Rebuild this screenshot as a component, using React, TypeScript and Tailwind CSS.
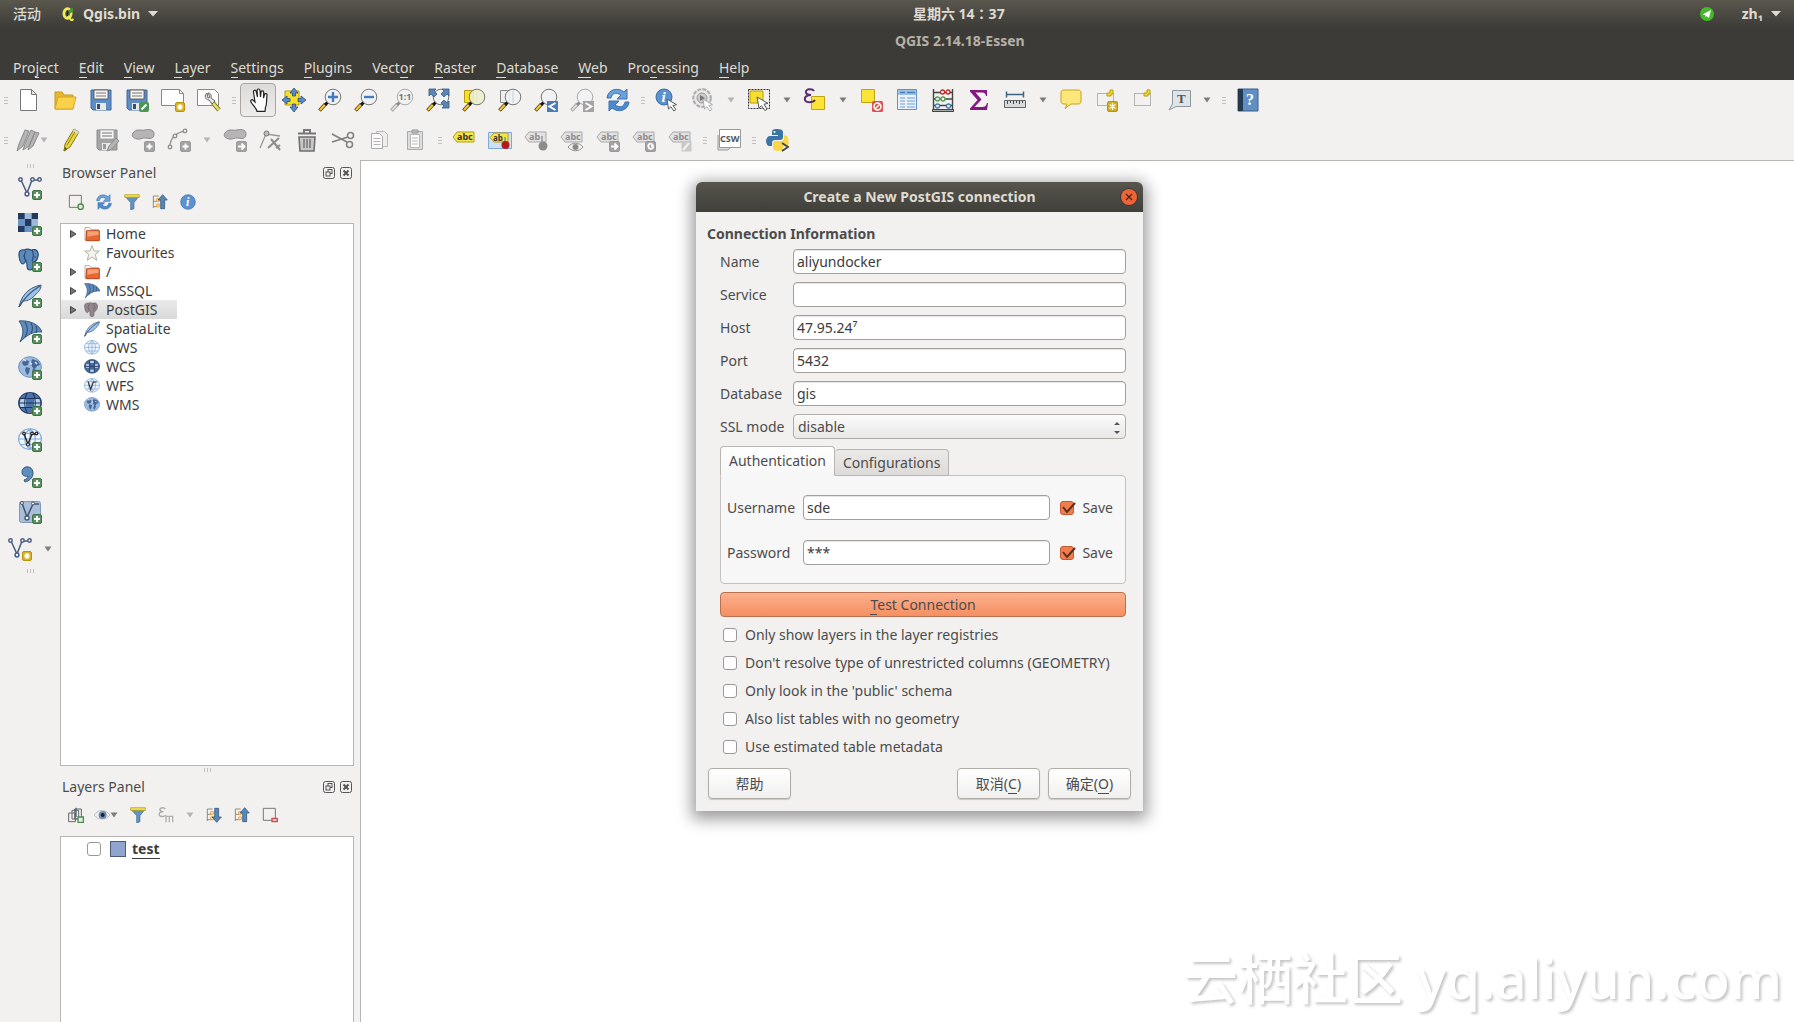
import React, { useState } from 'react';
import clsx from 'clsx';

type IconProps = { children?: React.ReactNode; size?: 'sm' | 'md' };

const Svg: React.FC<IconProps> = ({ children, size = 'md' }) => (
  <svg
    viewBox="0 0 24 24"
    fill="none"
    aria-hidden="true"
    className={clsx('shrink-0', size === 'sm' ? 'size-4' : 'size-6')}
  >
    {children}
  </svg>
);

/* ---------- shared icon parts ---------- */

const PlusBadge = () => (
  <g>
    <rect x="14.5" y="14.5" width="9" height="9" rx="1.5" fill="#5b9160" stroke="#3f7546" />
    <path d="M19 16v6M16 19h6" stroke="#fff" strokeWidth="2" />
  </g>
);

const StarBadge = () => (
  <g>
    <rect x="14.5" y="14.5" width="9" height="9" rx="1.5" fill="#d9b526" stroke="#b8930b" />
    <path d="M19 16v6M16 19h6M17 17l4 4M21 17l-4 4" stroke="#fff" strokeWidth="1.2" />
  </g>
);

const GreyBadge: React.FC<{ d: string }> = ({ d }) => (
  <g>
    <rect x="13.5" y="13.5" width="10" height="10" rx="1.5" fill="#a3a3a3" stroke="#999" />
    <path d={d} stroke="#fff" strokeWidth="1.8" />
  </g>
);

const Cursor: React.FC<{ muted?: boolean }> = ({ muted }) => (
  <path
    d="M12 11l1.5 10 2.4-2.3 3 4.3 2-1.5-3-4 3.6-.8z"
    fill="#fff"
    stroke={muted ? '#aaa' : '#555'}
  />
);

const Lens: React.FC<{ muted?: boolean; fill?: string }> = ({ muted, fill }) => (
  <g>
    <path d="M1.5 22.5l6-6.5" stroke={muted ? '#9a9a9a' : '#5b4a12'} strokeWidth="3.6" />
    <path d="M2 22l5.5-6" stroke={muted ? '#ddd' : '#f5c73c'} strokeWidth="2" />
    <path d="M7 17l3-3" stroke={muted ? '#888' : '#111'} strokeWidth="3" />
    <circle cx="15" cy="9" r="7.8" fill={fill || '#f0f2f4'} fillOpacity=".85" stroke={muted ? '#aaa' : '#777'} />
  </g>
);

const VNodes: React.FC<{ color?: string }> = ({ color = '#4a5d84' }) => (
  <g stroke={color} strokeWidth="1.5" fill="#fff">
    <path d="M3 4l6 13 5-13h7" fill="none" />
    <circle cx="2.5" cy="3.5" r="1.7" />
    <circle cx="14.5" cy="3.5" r="1.7" />
    <circle cx="21.5" cy="3.5" r="1.7" />
    <circle cx="9" cy="18" r="1.9" />
  </g>
);

const GlobeLines: React.FC<{ fill: string; line: string }> = ({ fill, line }) => (
  <g stroke={line} strokeWidth="1.1">
    <ellipse cx="12" cy="11" rx="11.4" ry="10.3" fill={fill} />
    <path d="M12 1v20M1 11h22M3 5.5h18M3 16.5h18M12 1c-7 5-7 15 0 20M12 1c7 5 7 15 0 20" />
  </g>
);

const Continents = () => (
  <g>
    <ellipse cx="12" cy="11" rx="11.4" ry="10.3" fill="#9dbbe0" stroke="#6c8fbd" />
    <path
      d="M4 6l4-2 3 1-1 4-3 1-2-1zM8 11l4 1-1 5-2 2-2-5zM14 3l6 2 2 4-3 1-2 3-3-2-1-4zM15 12l3 2-2 5-2-2z"
      fill="#466793"
    />
    <path d="M5 3l3 2M12 7l2 1M17 6l2 2" stroke="#dce8f5" strokeWidth="1.5" />
  </g>
);

const Elephant: React.FC<{ muted?: boolean }> = ({ muted }) => (
  <g fill={muted ? '#93868d' : '#5b8abb'} stroke={muted ? '#6d6268' : '#27486f'} strokeWidth="1.1">
    <path d="M6 2C2 1 .5 4 1 8c.5 4 2 8 4 8 1 0 2-2 3-3 1 1 1 2 1 5 0 3 1 4 3 4s3-1 3-4v-4c3 1 6-5 5-9-1-4-4-4-7-3-2-1-5-1-7 0z" />
    <path d="M8 3c-2 3-2 7 0 10M14 2c2 3 2 6 0 11M16 9h2M5 8h1" fill="none" />
  </g>
);

const Feather = () => (
  <g>
    <path d="M1 23C3 14 8 4 23 1c0 5-3 7-5 9-4 5-8 7-13 7z" fill="#9dc3e6" stroke="#3b5878" />
    <path d="M1 23C6 14 12 8 22 2" stroke="#3b5878" strokeWidth="1.3" />
  </g>
);

const Sail = () => (
  <g>
    <path d="M1 1c10-1 20 3 23 11-9-1-15 3-22 10 4-8 4-14-1-21z" fill="#5f8cbf" stroke="#35557c" />
    <path d="M7 2c3 5 3 10 0 15M13 3c2 4 2 7 0 10M18 6c1 3 1 5 0 7" stroke="#27466c" />
  </g>
);

const Floppy: React.FC<{ muted?: boolean }> = ({ muted }) => (
  <g>
    <path d="M2 2h20v20H4l-2-2z" fill={muted ? '#a5a5a5' : '#5c8dc4'} stroke={muted ? '#8d8d8d' : '#3f6a9e'} />
    <path d="M5 2h14v9H5z" fill="#f4f4f4" stroke={muted ? '#999' : '#4c4c4c'} strokeWidth=".8" />
    <path d="M7 5h10M7 8h10" stroke="#777" />
    <path d="M7 15h10v7H7z" fill="#e8e8e8" />
    <path d="M8 16h3v5H8z" fill={muted ? '#999' : '#3c4c66'} />
  </g>
);

const Refresh = () => (
  <g>
    <path d="M1 10C2 1 12-1 18 4l3-3v10H11l4-4C10 4 6 5 5 10z" fill="#6aa2dc" stroke="#3e73b0" />
    <path d="M23 14c-1 9-11 11-17 6l-3 3V13h10l-4 4c5 3 9 2 10-3z" fill="#4d8bd0" stroke="#3e73b0" />
  </g>
);

const Funnel = () => (
  <g>
    <path d="M2 4h20l-7 9v9l-5 2V13z" fill="#6393bf" stroke="#456f98" />
    <path d="M1 1h22v4H1z" fill="#f5de4a" stroke="#b29a16" />
  </g>
);

const TreeArrow: React.FC<{ up?: boolean }> = ({ up }) => (
  <g>
    <path d="M2 3v18M2 3h8M2 11h6M2 19h6" stroke="#8a8a8a" strokeWidth="1.5" />
    <path d="M7 7h4v4H7zM7 15h4v4H7z" fill="#fff1d8" stroke="#eaa13a" strokeWidth="1.5" />
    <path
      d={up ? 'M16 1l7 8h-4v13h-6V9H9z' : 'M16 23l7-8h-4V2h-6v13H9z'}
      fill="#5488b5"
      stroke="#27486f"
    />
  </g>
);

const Epsilon: React.FC<{ muted?: boolean }> = ({ muted }) => (
  <path
    d="M11 3C9 0 2 1 3 4.5 3.5 7 6 7 8 7 4 7 1 9 2 12c1 3 8 3 10 0"
    stroke={muted ? '#a8a8a8' : '#5b2d6e'}
    strokeWidth="2"
  />
);

const LabelTag: React.FC<{ muted?: boolean; text?: string }> = ({ muted, text = 'abc' }) => (
  <g>
    <path
      d="M1 9l4-5h17v10H5z"
      fill={muted ? '#e2e2e2' : '#f5e54c'}
      stroke={muted ? '#a9a9a9' : '#b3a012'}
    />
    <text
      x="5"
      y="12"
      fontSize="9"
      fontWeight="700"
      fontFamily="Noto Sans, sans-serif"
      fill={muted ? '#8c8c8c' : '#333'}
    >
      {text}
    </text>
  </g>
);

const Folder = () => (
  <g>
    <path d="M1.5 21V2.500h7l2 3h11V21z" fill="#fff" stroke="#b5aaa5" strokeWidth="1.5" />
    <path d="M4 7h19v15H3z" fill="#e8672f" stroke="#b8461b" strokeWidth="1.5" />
    <path d="M5 8h17v5L5 16z" fill="#f5a077" />
  </g>
);

const Info = () => (
  <g>
    <circle cx="12" cy="12" r="11" fill="#5c92cf" stroke="#3f6ea6" />
    <text x="9" y="18" fontSize="18" fontStyle="italic" fontWeight="700" fontFamily="Liberation Serif, serif" fill="#fff">
      i
    </text>
  </g>
);

/* ---------- controls ---------- */

const Grip: React.FC<{ first?: boolean }> = ({ first }) => (
  <div className={clsx('flex flex-col items-center justify-center gap-[2px]', first ? 'w-[11px]' : 'w-[13px]')}>
    <span className="h-px w-1 bg-[#c4c2bf]" />
    <span className="h-px w-1 bg-[#c4c2bf]" />
    <span className="h-px w-1 bg-[#c4c2bf]" />
  </div>
);

const GripRow = () => (
  <div className="flex h-2 items-center justify-center gap-[2px]">
    <span className="h-1 w-px bg-[#c4c2bf]" />
    <span className="h-1 w-px bg-[#c4c2bf]" />
    <span className="h-1 w-px bg-[#c4c2bf]" />
  </div>
);

const Tool: React.FC<{ label: string; active?: boolean; children: React.ReactNode }> = (props) => (
  <button
    type="button"
    aria-label={props.label}
    className={clsx(
      'flex h-[34px] w-9 shrink-0 items-center justify-center rounded',
      props.active && 'border border-[#a8a5a0] bg-gradient-to-b from-[#dcdbd9] to-[#eeedec]',
    )}
  >
    <Svg>{props.children}</Svg>
  </button>
);

const Drop: React.FC<{ label: string; muted?: boolean; narrow?: boolean }> = ({ label, muted, narrow }) => (
  <button
    type="button"
    aria-label={label}
    className={clsx('flex items-center justify-center', narrow ? 'w-2' : 'h-8 w-5', muted ? 'text-[#b5b5b5]' : 'text-[#7d7d7d]')}
  >
    <svg viewBox="0 0 8 6" className="h-[6px] w-2 shrink-0" aria-hidden="true">
      <path d="M.5.5h7L4 5.5z" fill="currentColor" />
    </svg>
  </button>
);

const SmallTool: React.FC<{ label: string; children: React.ReactNode }> = (props) => (
  <button type="button" aria-label={props.label} className="flex size-7 items-center justify-center">
    <Svg size="sm">{props.children}</Svg>
  </button>
);

/* ---------- top ---------- */

const MENU: [string, number][] = [
  ['Project', 3],
  ['Edit', 0],
  ['View', 0],
  ['Layer', 0],
  ['Settings', 0],
  ['Plugins', 0],
  ['Vector', 4],
  ['Raster', 0],
  ['Database', 0],
  ['Web', 0],
  ['Processing', 3],
  ['Help', 0],
];

const Accel: React.FC<{ text: string; at: number }> = ({ text, at }) => (
  <>
    {text.slice(0, at)}
    <span className="border-b border-current">{text[at]}</span>
    {text.slice(at + 1)}
  </>
);

const Header = () => (
  <header className="h-20 bg-[#3c3b37] bg-gradient-to-b from-[#5a574d] to-[#3c3b37] to-35% text-[#dfdbd2]">
    <div className="flex h-7 items-center text-sm font-bold">
      <div className="flex flex-1 items-center pl-[13px]">
        <button type="button" className="font-medium">
          活动
        </button>
        <button type="button" className="ml-5 flex items-center gap-2">
          <svg viewBox="0 0 14 14" className="size-[14px]" aria-hidden="true">
            <ellipse cx="6.5" cy="6.5" rx="3.6" ry="4.8" fill="none" stroke="#ecec50" strokeWidth="2.8" />
            <path d="M6.5 8.500l4 5 2-1.500" fill="none" stroke="#ecec50" strokeWidth="2" />
            <path d="M7.500 3.500L12 .5v4L8.500 7z" fill="#3f9a28" />
            <path d="M6.5 4v5" stroke="#222" />
          </svg>
          Qgis.bin
          <svg viewBox="0 0 10 6" className="h-[6px] w-[10px]" aria-hidden="true">
            <path d="M0 0h10L5 5.5z" fill="currentColor" />
          </svg>
        </button>
      </div>
      <time className="font-['Noto_Sans','Noto_Sans_CJK_TC',sans-serif]">星期六 14：37</time>
      <div className="flex w-[44%] items-center justify-end gap-7 pr-[13px]">
        <svg viewBox="0 0 14 14" className="size-[14px]" aria-hidden="true">
          <circle cx="7" cy="7" r="7" fill="#45b82c" />
          <path d="M2.5 7.5L11 3 9 11 6.5 9 5.5 10.5V8.3z" fill="#fff" />
        </svg>
        <button type="button" className="flex items-center gap-2">
          zh₁
          <svg viewBox="0 0 10 6" className="h-[6px] w-[10px]" aria-hidden="true">
            <path d="M0 0h10L5 5.5z" fill="currentColor" />
          </svg>
        </button>
      </div>
    </div>
    <h1 className="flex h-[26px] items-center justify-center pl-[7%] text-sm font-bold text-[#b5b1a6]">
      QGIS 2.14.18-Essen
    </h1>
    <nav className="flex h-[26px] items-center gap-5 pt-[2px] pl-[13px] text-sm leading-[18px]">
      {MENU.map(([text, at]) => (
        <button type="button" key={text}>
          <Accel text={text} at={at} />
        </button>
      ))}
    </nav>
  </header>
);

const MainToolbar = () => (
  <div className="flex h-10 items-center">
    <Grip first />
    <Tool label="New project">
      <path d="M3.5 1.5h11l5 5v16h-16z" fill="#fff" stroke="#777" />
      <path d="M14.5 1.5v5h5z" fill="#e8e8e8" stroke="#777" />
    </Tool>
    <Tool label="Open project">
      <path d="M2 21V4h7l2 3h9v14z" fill="#e8b830" stroke="#c79a1c" />
      <path d="M2 21L5 9h18l-3 12z" fill="#fbd14b" stroke="#d6a722" />
    </Tool>
    <Tool label="Save project">
      <Floppy />
    </Tool>
    <Tool label="Save project as">
      <Floppy />
      <rect x="14" y="14" width="10" height="10" rx="2" fill="#4c9358" />
      <path d="M16.5 21.5l5-5" stroke="#fff" strokeWidth="2" />
    </Tool>
    <Tool label="New print composer">
      <path d="M.5 1.5h18l4 4v12H.5z" fill="#fff" stroke="#888" />
      <path d="M18.5 1.5v4h4" stroke="#888" />
      <StarBadge />
    </Tool>
    <Tool label="Composer manager">
      <path d="M.5 1.5h17l4 4v12H.5z" fill="#fff" stroke="#888" />
      <path d="M16 15l6 7" stroke="#8b8025" strokeWidth="4.5" />
      <path d="M16 15l6 7" stroke="#e4e07a" strokeWidth="2.5" />
      <path d="M10 5c-3 2-2 7 2 7l3 4 3-3-4-3c1-4-1-5-3-5l2 4-2 1z" fill="#e8e8e8" stroke="#666" />
    </Tool>
    <Grip />
    <Tool label="Pan map" active>
      <path
        d="M9 14L7.500 4c-.3-2 2.200-2.500 2.700-.5L11.500 9l-.4-6.500c0-2 2.700-2 2.900 0L14.500 9l.6-5c.2-1.800 2.700-1.500 2.600.3L17.500 10l1-3.500c.6-1.600 2.800-1 2.500.8-.8 5 .2 9-1.500 12l-.5 4h-8C10.500 20 6.500 17 5 14c-1-2 1-3 2.300-1.700z"
        fill="#fff"
        stroke="#222"
        strokeWidth="1.2"
      />
    </Tool>
    <Tool label="Pan map to selection">
      <path d="M3 3h14v14H3z" fill="#f7df2c" stroke="#b59d10" />
      <path
        d="M12 0l4 5h-2.5v3h-3V5H8zM12 24l4-5h-2.5v-3h-3v3H8zM0 12l5-4v2.5h3v3H5V16zM24 12l-5-4v2.5h-3v3h3V16z"
        fill="#5a8cc6"
        stroke="#274b78"
        strokeWidth=".8"
      />
    </Tool>
    <Tool label="Zoom in">
      <Lens />
      <path d="M15 4v10M10 9h10" stroke="#447cc0" strokeWidth="2.4" />
    </Tool>
    <Tool label="Zoom out">
      <Lens />
      <path d="M10 9h10" stroke="#447cc0" strokeWidth="2.4" />
    </Tool>
    <Tool label="Zoom to native resolution">
      <Lens muted />
      <text x="8.5" y="12" fontSize="9" fontWeight="700" fontFamily="Noto Sans, sans-serif" fill="#777">
        1:1
      </text>
    </Tool>
    <Tool label="Zoom full">
      <Lens />
      <path
        d="M3 1h7L8 3l3 3-3 3-3-3-2 2zM23 1v7l-2-2-3 3-3-3 3-3-2-2zM23 20h-7l2-2-3-3 3-3 3 3 2-2z"
        fill="#5a86b8"
        stroke="#34597f"
        strokeWidth=".8"
      />
    </Tool>
    <Tool label="Zoom to selection">
      <path d="M2.5 2.5h9v12h-9z" fill="#f7df2c" stroke="#b59d10" />
      <Lens fill="#eef0c8" />
      <path d="M15 3v12" stroke="#ddd" />
    </Tool>
    <Tool label="Zoom to layer">
      <path d="M2.5 2.5h9v12h-9z" fill="#eee" stroke="#888" />
      <Lens />
      <path d="M15 3v12" stroke="#ccc" />
    </Tool>
    <Tool label="Zoom last">
      <Lens />
      <path d="M13 13h11v11H13z" fill="#4a7db5" />
      <path d="M21.5 15l-6 3.5 6 3.5" stroke="#fff" strokeWidth="2" />
    </Tool>
    <Tool label="Zoom next">
      <Lens muted />
      <path d="M13 13h11v11H13z" fill="#a3a3a3" />
      <path d="M15.5 15l6 3.5-6 3.5" stroke="#fff" strokeWidth="2" />
    </Tool>
    <Tool label="Refresh">
      <Refresh />
    </Tool>
    <Grip />
    <Tool label="Identify features">
      <circle cx="9" cy="9" r="8" fill="#5c92cf" stroke="#3f6ea6" />
      <text x="6.5" y="14" fontSize="15" fontStyle="italic" fontWeight="700" fontFamily="Liberation Serif, serif" fill="#fff">
        i
      </text>
      <Cursor />
    </Tool>
    <Tool label="Run feature action">
      <circle cx="11" cy="10" r="8.8" fill="#e9e9e9" stroke="#b0b0b0" strokeWidth="2.2" strokeDasharray="4 1.2" />
      <circle cx="11" cy="10" r="5" fill="#ccc" stroke="#999" />
      <path d="M9 7l5 3-5 3z" fill="#777" />
      <Cursor muted />
    </Tool>
    <Drop label="Feature actions" muted />
    <Tool label="Select features">
      <path d="M1.5 1.5h21v19h-21z" stroke="#333" strokeDasharray="2 1" />
      <path d="M3 3h13v12H3z" fill="#f7df2c" stroke="#b59d10" />
      <path d="M10 9l2 11 2.4-2.3 3.6 5 2-1.5-3-5 4-.8z" fill="#fff" stroke="#555" />
    </Tool>
    <Drop label="Selection tools" />
    <Tool label="Select by expression">
      <path d="M8.5 8.5h13v13h-13z" fill="#fbe338" stroke="#c2a512" />
      <Epsilon />
    </Tool>
    <Drop label="Expression tools" />
    <Tool label="Deselect features">
      <path d="M2.5 1.5h13v13h-13z" fill="#fbe338" stroke="#c2a512" />
      <rect x="13" y="13" width="11" height="11" rx="1.5" fill="#d9534f" />
      <circle cx="18.5" cy="18.5" r="3.5" stroke="#fff" strokeWidth="1.5" />
      <path d="M16 21l5-5" stroke="#fff" strokeWidth="1.5" />
    </Tool>
    <Tool label="Attribute table">
      <path d="M2.5 1.5h19v20h-19z" fill="#eaf2fb" stroke="#5f92c9" />
      <path d="M3 2h18v5H3z" fill="#9cc2ea" />
      <path d="M5 4.5h5M12 4.5h8" stroke="#4c7fb8" strokeWidth="1.5" />
      <path d="M5 10h5M12 10h8M5 13h5M12 13h8M5 16h5M12 16h8M5 19h5M12 19h8" stroke="#6d9dcf" />
    </Tool>
    <Tool label="Field calculator">
      <path d="M2.5 1v21M21.5 1v21M1 22.5h22M2 4.5h20M2 11h20M2 17.5h20" stroke="#444" strokeWidth="1.4" />
      <path d="M1.5 21.5h21v2h-21z" fill="#aaa" stroke="#444" />
      <g fill="#fff" strokeWidth="1.3">
        <circle cx="11.5" cy="4" r="2" stroke="#c12a2a" />
        <circle cx="17" cy="4" r="2" stroke="#c12a2a" />
        <circle cx="6.5" cy="11" r="2" stroke="#4ea04e" />
        <circle cx="12" cy="11" r="2" stroke="#4ea04e" />
        <circle cx="6.5" cy="18" r="2" stroke="#3f7ab0" />
        <circle cx="17.5" cy="18" r="2" stroke="#3f7ab0" />
      </g>
    </Tool>
    <Tool label="Statistical summary">
      <path
        d="M3 2h17v6h-1c-.5-3-2-3.5-5-3.5H8.5l6 7-7 7.5H15c3 0 4-1 5-4h1l-1 7H3v-1.5L10.5 12 3 3.5z"
        fill="#811a80"
      />
    </Tool>
    <Tool label="Measure line">
      <path d="M3.5 6.5h17M3.5 3.5v6M20.5 3.5v6" stroke="#3d6480" strokeWidth="1.5" />
      <path d="M1.5 12.5h21v7h-21z" fill="#d8dcdf" stroke="#666" />
      <path d="M4.5 13v3M7.5 13v2M10.5 13v3M13.5 13v2M16.5 13v3M19.5 13v2" stroke="#444" />
    </Tool>
    <Drop label="Measure tools" />
    <Tool label="Map tips">
      <path
        d="M5 2h14c2 0 3 1 3 3v8c0 2-1 3-3 3h-7l-6 4.5L8 16H5c-2 0-3-1-3-3V5c0-2 1-3 3-3z"
        fill="#fbe77c"
        stroke="#c9a41a"
      />
    </Tool>
    <Tool label="New bookmark">
      <path d="M2.5 5.5h16v12h-16z" stroke="#777" strokeDasharray="1 1" />
      <path d="M15 2h3v4h-2v2h-4V5h3z" fill="#fbdd2c" stroke="#bb9a0c" />
      <rect x="12.5" y="13.5" width="10" height="10" rx="1.5" fill="#cfae22" stroke="#b8930b" />
      <path d="M17.5 15v7M14.5 16.500l6 4M20.5 16.500l-6 4" stroke="#fff" strokeWidth="1.2" />
    </Tool>
    <Tool label="Show bookmarks">
      <path d="M3.5 5.5h16v12h-16z" stroke="#777" strokeDasharray="1 1" />
      <path d="M16 2h3v4h-2v2h-4V5h3z" fill="#fbdd2c" stroke="#bb9a0c" />
    </Tool>
    <Tool label="Text annotation">
      <path d="M5.5 2.5h18v16H9L2 22l3.500-6z" fill="#dfe4e8" stroke="#8d979f" />
      <text x="10" y="15" fontSize="13" fontWeight="700" fontFamily="Liberation Serif, serif" fill="#555">
        T
      </text>
    </Tool>
    <Drop label="Annotation tools" />
    <Grip />
    <Tool label="Help contents">
      <path d="M2 1h20v22H2z" fill="#5f8fc4" stroke="#3b5f8a" />
      <path d="M2 1h5v22H2z" fill="#243950" />
      <text x="10" y="17" fontSize="16" fontFamily="Liberation Serif, serif" fontWeight="700" fill="#fff">
        ?
      </text>
    </Tool>
  </div>
);

const Blob = () => (
  <path d="M2 5c3-5 9-2 12-3s9-1 9 4-4 5-8 4c-3-1-5 2-9 1S0 8 2 5z" fill="#b5b5b5" stroke="#8c8c8c" />
);

const EditToolbar = () => (
  <div className="flex h-10 items-center">
    <Grip first />
    <div className="flex w-[42px] items-center pl-[5px]">
      <button type="button" aria-label="Current edits">
        <Svg>
          <path d="M1 23l2-7L9 2l4 1-6 15zM7 22l2-6 6-14 4 2-6 14zM12 22l2-6 5-12 4 1-6 13z" fill="#b5b5b5" stroke="#8c8c8c" />
        </Svg>
      </button>
      <Drop label="Edit options" muted narrow />
    </div>
    <Tool label="Toggle editing">
      <path d="M5 23l1-7L15 1l5 3-9 15z" fill="#e8d438" stroke="#857819" />
      <path d="M8 17l9-15M5 23l1-4 2 2z" stroke="#8f8221" fill="#333" />
      <path d="M15 1l5 3-1 2-5-3z" fill="#ddd" />
    </Tool>
    <Tool label="Save layer edits">
      <Floppy muted />
      <path d="M12 23l2-5 7-8 3 3-7 8z" fill="#b5b5b5" stroke="#8c8c8c" />
    </Tool>
    <Tool label="Add feature">
      <Blob />
      <GreyBadge d="M18.5 15.5v6M15.5 18.5h6" />
    </Tool>
    <Tool label="Add circular string">
      <path d="M3 19C3 10 8 5 18 3" stroke="#9a9a9a" strokeWidth="1.3" />
      <g fill="#eee" stroke="#8c8c8c" strokeWidth="1.3">
        <circle cx="3" cy="19" r="1.8" />
        <circle cx="8" cy="8" r="1.8" />
        <circle cx="18" cy="3" r="1.8" />
      </g>
      <GreyBadge d="M18.5 15.5v6M15.5 18.5h6" />
    </Tool>
    <Drop label="Curve tools" muted />
    <Tool label="Move feature">
      <Blob />
      <GreyBadge d="M15 18.5h6M18.5 15.5l3 3-3 3" />
    </Tool>
    <Tool label="Node tool">
      <path d="M1 20L7 6l14 2" stroke="#999" strokeWidth="1.3" />
      <circle cx="7.5" cy="5.5" r="2.5" fill="#bbb" stroke="#777" />
      <path d="M20 10L9 20M12 11l9 11M17 20l4-3" stroke="#8c8c8c" strokeWidth="2" />
    </Tool>
    <Tool label="Delete selected">
      <path d="M4 9h16l-1 14H5z" fill="#c8c8c8" stroke="#6f6f6f" strokeWidth="1.6" />
      <path d="M3 5.5h18M9 5V2h6v3" stroke="#777" strokeWidth="2" />
      <path d="M9 11v9M12 11v9M15 11v9" stroke="#777" strokeWidth="1.5" />
    </Tool>
    <Tool label="Cut features">
      <path d="M1 6l15 8M1 14l16-5" stroke="#808080" strokeWidth="1.6" />
      <circle cx="19.5" cy="7.5" r="3" stroke="#808080" strokeWidth="1.5" />
      <circle cx="18.5" cy="16.5" r="3" stroke="#808080" strokeWidth="1.5" />
    </Tool>
    <Tool label="Copy features">
      <path d="M9.5 3.5h8l3 3v12h-11z" fill="#eee" stroke="#bbb" />
      <path d="M4.5 5.5h8l3 3v12h-11z" fill="#fafafa" stroke="#aaa" />
      <path d="M6.5 10.5h7M6.5 13.5h7M6.5 16.5h7" stroke="#b5b5b5" />
    </Tool>
    <Tool label="Paste features">
      <path d="M4.5 3.5h15v18h-15z" fill="#ddd" stroke="#aaa" />
      <path d="M7.5 6.5h9v13h-9z" fill="#fff" stroke="#b5b5b5" />
      <path d="M9 2h6v3H9z" fill="#bbb" stroke="#999" />
      <path d="M9 10h6M9 13h6M9 16h6" stroke="#b5b5b5" />
    </Tool>
    <Grip />
    <Tool label="Layer labeling options">
      <LabelTag />
    </Tool>
    <Tool label="Highlight pinned labels">
      <path d="M.5 4.5h23v16H.5z" fill="#cfe0f5" stroke="#7fa8db" />
      <path d="M2 9.5L6 5h14v9H6z" fill="#f5e54c" stroke="#b3a012" />
      <text x="5" y="12.5" fontSize="8" fontWeight="700" fontFamily="Noto Sans, sans-serif" fill="#333">
        ab
      </text>
      <path d="M17 9v7" stroke="#888" strokeWidth="1.5" />
      <circle cx="17.5" cy="17" r="4" fill="#b01c1c" />
    </Tool>
    <Tool label="Pin labels">
      <LabelTag muted text="ab" />
      <path d="M18 8v8" stroke="#aaa" strokeWidth="2" />
      <circle cx="19" cy="18" r="4.5" fill="#8c8c8c" />
    </Tool>
    <Tool label="Show or hide labels">
      <LabelTag muted />
      <path d="M8 19c4-5 11-5 15 0-4 5-11 5-15 0z" fill="#f5f5f5" stroke="#8c8c8c" />
      <circle cx="15.5" cy="19" r="3" fill="#888" />
    </Tool>
    <Tool label="Move label">
      <LabelTag muted />
      <GreyBadge d="M15 18.5h6M18.5 15.5l3 3-3 3" />
    </Tool>
    <Tool label="Rotate label">
      <LabelTag muted />
      <GreyBadge d="M21 17c-3-3-6 0-4 3 2 2 5 0 4-2h-2" />
    </Tool>
    <Tool label="Change label">
      <LabelTag muted />
      <path d="M13.5 13.5h10v10h-10z" fill="#c9c9c9" />
      <path d="M15 22l6-7" stroke="#f2f2f2" strokeWidth="2" />
    </Tool>
    <Grip />
    <Tool label="MetaSearch">
      <path d="M1 7v15h10l2-2" stroke="#999" fill="#ddd" />
      <path d="M2.5 1.5h21v18h-21z" fill="#fff" stroke="#999" />
      <text x="3" y="14" fontSize="9" fontWeight="700" fontFamily="Noto Sans, sans-serif" fill="#555">
        CSW
      </text>
    </Tool>
    <Grip />
    <Tool label="Python console">
      <path d="M11 1c-4 0-5 1-5 3v3h6v1H4c-2 0-4 2-4 5s2 5 3 5h3v-3c0-2 1-3 3-3h5c2 0 3-1 3-3V4c0-2-2-3-6-3z" fill="#3b75a5" />
      <circle cx="8.5" cy="4" r="1" fill="#fff" />
      <path d="M18 7v3c0 2-1 3-3 3h-5c-2 0-3 1-3 3v4c0 2 2 3 5 3s5-1 5-3v-2h5c1-1 1-8-1-10z" fill="#fbd648" />
      <path d="M16 15l6 4-6 4" stroke="#444" strokeWidth="1.8" />
    </Tool>
  </div>
);

/* ---------- docks ---------- */

const LayerToolbar = () => (
  <aside className="flex w-[60px] shrink-0 flex-col items-center pt-[2px] [&>button]:my-px">
    <GripRow />
    <Tool label="Add vector layer">
      <VNodes />
      <PlusBadge />
    </Tool>
    <Tool label="Add raster layer">
      <path d="M0 1h20v19H0z" fill="#6a93c4" />
      <path d="M0 1h6.5v6H0zM13.5 1H20v6h-6.5zM7 7h6.5v7H7zM0 14h6.5v6H0z" fill="#233a5e" />
      <path d="M7 1h6.5v6H7zM13.5 7H20v7h-6.5z" fill="#9db8d9" />
      <PlusBadge />
    </Tool>
    <Tool label="Add PostGIS layer">
      <Elephant />
      <PlusBadge />
    </Tool>
    <Tool label="Add SpatiaLite layer">
      <Feather />
      <PlusBadge />
    </Tool>
    <Tool label="Add MSSQL layer">
      <Sail />
      <PlusBadge />
    </Tool>
    <Tool label="Add WMS layer">
      <Continents />
      <PlusBadge />
    </Tool>
    <Tool label="Add WCS layer">
      <ellipse cx="12" cy="11" rx="11.2" ry="10.2" fill="#b8d0ec" stroke="#27406b" strokeWidth="1.5" />
      <path d="M4 4c5-4 11-4 16 0l1 2H3zM3 16h18c-4 6-14 6-18 0zM8 7h8v8H8z" fill="#4a73a8" />
      <path d="M1 11h22M2 6.5h20M2 15.5h20M9 1c-3 6-3 14 0 20M15 1c3 6 3 14 0 20" stroke="#1f355c" strokeWidth="1.2" />
      <PlusBadge />
    </Tool>
    <Tool label="Add WFS layer">
      <GlobeLines fill="#f3f8fe" line="#7fa9dc" />
      <path d="M6 6l4 10 4-10h5" stroke="#222" strokeWidth="1.4" />
      <g fill="#fff" stroke="#222" strokeWidth="1.2">
        <circle cx="6" cy="5.5" r="1.3" />
        <circle cx="14" cy="5.5" r="1.3" />
        <circle cx="18.5" cy="5.5" r="1.3" />
        <circle cx="10" cy="16.5" r="1.5" />
      </g>
      <PlusBadge />
    </Tool>
    <Tool label="Add delimited text layer">
      <path d="M4 8c0-7 11-7 11 1 0 5-4 8-8 9l-1-2c3-1 4-2 4-4-4 1-6-1-6-4z" fill="#5c8fc0" stroke="#35557c" />
      <PlusBadge />
    </Tool>
    <Tool label="Add virtual layer">
      <rect x="1.5" y="1.5" width="21" height="21" rx="2" fill="#a9bfd9" stroke="#7f98b8" />
      <path d="M4 3l5 14 6-13h6" stroke="#44546f" strokeWidth="1.5" />
      <circle cx="9" cy="18" r="2" fill="#fff" stroke="#44546f" strokeWidth="1.3" />
      <circle cx="4" cy="3" r="1.5" fill="#fff" stroke="#44546f" />
      <circle cx="15" cy="3.5" r="1.5" fill="#fff" stroke="#44546f" />
      <PlusBadge />
    </Tool>
    <div className="mt-px flex h-9 w-full items-center pl-[2px]">
      <Tool label="New shapefile layer">
        <VNodes />
        <StarBadge />
      </Tool>
      <Drop label="New layer types" />
    </div>
    <GripRow />
  </aside>
);

const PanelTitle: React.FC<{ title: string }> = ({ title }) => (
  <div className="flex h-[25px] items-center gap-[5px] pr-[2px] pl-[2px] text-sm text-[#4c4c4c]">
    <h2 className="flex-1">{title}</h2>
    <button type="button" aria-label={`Float ${title}`}>
      <svg viewBox="0 0 12 12" className="size-3" fill="none" stroke="#555" aria-hidden="true">
        <rect x=".5" y=".5" width="11" height="11" rx="2" />
        <rect x="5" y="2.5" width="4" height="4" />
        <rect x="3" y="5" width="4" height="4" fill="#f2f1f0" />
      </svg>
    </button>
    <button type="button" aria-label={`Close ${title}`}>
      <svg viewBox="0 0 12 12" className="size-3" fill="none" stroke="#555" aria-hidden="true">
        <rect x=".5" y=".5" width="11" height="11" rx="2" />
        <path d="M3.5 3.5l5 5M8.5 3.5l-5 5" strokeWidth="2" />
      </svg>
    </button>
  </div>
);

const TREE: { name: string; icon: React.ReactNode; open?: boolean; selected?: boolean }[] = [
  { name: 'Home', icon: <Folder />, open: true },
  {
    name: 'Favourites',
    icon: <path d="M12 1l3 8h8l-6 5 2 9-7-5-7 5 2-9-6-5h8z" fill="#f4f4ee" stroke="#b3b3a8" strokeWidth="1.5" />,
  },
  { name: '/', icon: <Folder />, open: true },
  { name: 'MSSQL', icon: <Sail />, open: true },
  { name: 'PostGIS', icon: <Elephant muted />, open: true, selected: true },
  { name: 'SpatiaLite', icon: <Feather /> },
  { name: 'OWS', icon: <GlobeLines fill="#eef5fd" line="#84abd9" /> },
  {
    name: 'WCS',
    icon: (
      <g>
        <ellipse cx="12" cy="11" rx="11.4" ry="10.3" fill="#4a6c9c" stroke="#27406b" />
        <path d="M3 8h5v5H3zM16 8h5v5h-5zM9 3h6v3H9zM9 16h6v3H9z" fill="#c3d7ef" />
        <path d="M1 11h22M8.500 2v18M15.500 2v18" stroke="#27406b" strokeWidth="1.5" />
      </g>
    ),
  },
  {
    name: 'WFS',
    icon: (
      <g>
        <GlobeLines fill="#eef5fd" line="#84abd9" />
        <path d="M6 5l4 12 4-11h5" stroke="#333" strokeWidth="1.8" />
      </g>
    ),
  },
  { name: 'WMS', icon: <Continents /> },
];

const BrowserPanel = () => (
  <section className="flex min-h-0 flex-[606] flex-col">
    <PanelTitle title="Browser Panel" />
    <div className="flex h-[38px] items-center pb-[5px] pl-[2px]">
      <SmallTool label="Add selected layers">
        <path d="M2 2h18v18H2z" stroke="#777" strokeWidth="1.5" />
        <circle cx="19" cy="19" r="4" fill="#dfeedd" stroke="#4f8a4f" strokeWidth="2" />
      </SmallTool>
      <SmallTool label="Refresh browser">
        <Refresh />
      </SmallTool>
      <SmallTool label="Filter browser">
        <Funnel />
      </SmallTool>
      <SmallTool label="Collapse all">
        <TreeArrow up />
      </SmallTool>
      <SmallTool label="Properties">
        <Info />
      </SmallTool>
    </div>
    <ul className="flex-1 border border-[#b8b5b2] bg-white text-sm leading-[19px] text-[#3c3c3c]">
      {TREE.map((item) => (
        <li
          key={item.name}
          className={clsx(
            'flex h-[19px] w-fit items-center pr-5 pl-2',
            item.selected && 'bg-gradient-to-b from-[#eaeaea] to-[#d9d9d9]',
          )}
        >
          <span className="flex w-[15px]">
            {item.open && (
              <button type="button" aria-label={`Expand ${item.name}`}>
                <svg viewBox="0 0 8 8" className="size-2" aria-hidden="true">
                  <path d="M1.5.5L7 4 1.5 7.5z" fill="#777" stroke="#444" />
                </svg>
              </button>
            )}
          </span>
          <Svg size="sm">{item.icon}</Svg>
          <span className="ml-[6px]">{item.name}</span>
        </li>
      ))}
    </ul>
  </section>
);

const LayersPanel = () => (
  <section className="flex min-h-0 flex-[248] flex-col">
    <PanelTitle title="Layers Panel" />
    <div className="flex h-[37px] items-center pb-[5px] pl-[2px]">
      <SmallTool label="Add group">
        <path d="M1 9h10v13H1zM6 5h10v13H6zM10 3h10v15H10z" stroke="#666" strokeWidth="1.5" />
        <path d="M12 1v14" stroke="#3d6480" strokeWidth="2" />
        <path d="M15 15h8v8h-8z" fill="#e3f0e0" stroke="#4f8a4f" strokeWidth="2" />
      </SmallTool>
      <div className="flex w-[34px] items-center pl-1">
        <button type="button" aria-label="Manage visibility">
          <Svg size="sm">
            <path d="M0 12c6-9 18-9 24 0-6 8-18 8-24 0z" fill="#ececec" stroke="#aaa" />
            <circle cx="13" cy="12" r="6" fill="#6c8fb5" />
            <circle cx="13" cy="12" r="3" fill="#222" />
          </Svg>
        </button>
        <Drop label="Visibility presets" narrow />
      </div>
      <SmallTool label="Filter legend">
        <Funnel />
      </SmallTool>
      <SmallTool label="Filter by expression">
        <Epsilon muted />
        <path d="M12 23v-9h10v9M17 15v8" stroke="#b0b0b0" strokeWidth="2" />
      </SmallTool>
      <Drop label="Expression filter" muted />
      <SmallTool label="Expand all">
        <TreeArrow />
      </SmallTool>
      <SmallTool label="Collapse all layers">
        <TreeArrow up />
      </SmallTool>
      <SmallTool label="Remove layer">
        <path d="M2 2h18v18H2z" stroke="#777" strokeWidth="1.5" />
        <rect x="14" y="16" width="10" height="7" rx="1" fill="#d34b52" />
        <path d="M16 19.5h6" stroke="#fff" strokeWidth="2" />
      </SmallTool>
    </div>
    <div className="flex-1 border border-b-0 border-[#b8b5b2] bg-white pt-[2px] pl-[26px]">
      <label className="flex h-5 items-center text-sm font-bold text-[#3c3c3c]">
        <input type="checkbox" className="size-[14px] appearance-none rounded-[3px] border border-[#999] bg-white" />
        <span className="ml-[9px] size-4 border border-[#4e5b78] bg-[#8fa5cf]" />
        <span className="ml-[6px] border-b border-[#3c3c3c] leading-[18px]">test</span>
      </label>
    </div>
  </section>
);

/* ---------- dialog ---------- */

const inputClass =
  'h-[25px] w-full rounded border border-[#a3a09c] bg-white px-[3px] text-sm text-[#3c3c3c] outline-none shadow-[inset_0_1px_1px_#e4e4e4]';

const Field: React.FC<{ id: string; label: string; value?: string }> = ({ id, label, value }) => (
  <>
    <label htmlFor={id}>{label}</label>
    <input id={id} type="text" defaultValue={value} className={inputClass} />
  </>
);

const SaveBox: React.FC<{ label: string }> = ({ label }) => (
  <label className="flex items-center gap-2" title={label}>
    <span className="relative flex size-[14px]">
      <input
        type="checkbox"
        defaultChecked
        className="peer size-[14px] appearance-none rounded-[3px] border border-[#999] bg-white checked:border-[#bf5a33] checked:bg-[#f47d50]"
      />
      <svg
        viewBox="0 0 16 14"
        className="pointer-events-none absolute top-0 left-0 hidden h-[14px] w-4 peer-checked:block"
        aria-hidden="true"
      >
        <path d="M3 6l4 5 8-9" fill="none" stroke="#5a2f1e" strokeWidth="2" />
      </svg>
    </span>
    Save
  </label>
);

const OPTIONS = [
  'Only show layers in the layer registries',
  "Don't resolve type of unrestricted columns (GEOMETRY)",
  "Only look in the 'public' schema",
  'Also list tables with no geometry',
  'Use estimated table metadata',
];

const DialogButton: React.FC<{ children: React.ReactNode }> = ({ children }) => (
  <button
    type="button"
    className="h-[31px] w-[83px] rounded border border-[#b0ada9] bg-gradient-to-b from-white to-[#f1f0ef] text-sm shadow-[0_1px_1px_#c9c7c4]"
  >
    {children}
  </button>
);

const ConnectionDialog = () => {
  const [tab, setTab] = useState('auth');

  return (
    <div
      role="dialog"
      aria-labelledby="dialog-title"
      className="absolute top-[182px] left-[696px] w-[447px] rounded-t-md bg-[#f2f1f0] text-sm text-[#4c4c4c] shadow-[0_4px_16px_4px_rgba(0,0,0,0.4)]"
    >
      <div className="flex h-[30px] items-center rounded-t-md bg-gradient-to-b from-[#57554c] to-[#403f3a] pr-[6px] pl-[22px] text-[#dfdbd2]">
        <h2 id="dialog-title" className="flex-1 text-center font-bold">
          Create a New PostGIS connection
        </h2>
        <button
          type="button"
          aria-label="Close"
          className="flex size-4 items-center justify-center rounded-full bg-[#ee6436] ring-1 ring-[#3a3935]"
        >
          <svg viewBox="0 0 8 8" className="size-2" aria-hidden="true">
            <path d="M1 1l6 6M7 1L1 7" stroke="#4a2415" strokeWidth="1.3" />
          </svg>
        </button>
      </div>

      <form className="p-3" onSubmit={(e) => e.preventDefault()}>
        <h3 className="-ml-px leading-5 font-bold">Connection Information</h3>

        <div className="mt-[5px] pr-[5px] pl-3">
          <div className="grid grid-cols-[73px_1fr] items-center gap-y-2">
            <Field id="name" label="Name" value="aliyundocker" />
            <Field id="service" label="Service" />
            <Field id="host" label="Host" value="47.95.24⁷" />
            <Field id="port" label="Port" value="5432" />
            <Field id="database" label="Database" value="gis" />
            <label htmlFor="ssl" className="whitespace-nowrap">
              SSL mode
            </label>
            <div className="relative">
              <select
                id="ssl"
                defaultValue="disable"
                className="h-[25px] w-full appearance-none rounded border border-[#b0ada9] bg-gradient-to-b from-[#fbfbfb] to-[#e9e8e7] px-1 text-sm outline-none"
              >
                <option>disable</option>
                <option>allow</option>
                <option>prefer</option>
                <option>require</option>
              </select>
              <svg viewBox="0 0 6 14" className="pointer-events-none absolute top-[7px] right-[6px] h-[14px] w-[6px]" aria-hidden="true">
                <path d="M0 4h6L3 1zM0 10h6L3 13z" fill="#555" />
              </svg>
            </div>
          </div>

          <div role="tablist" className="relative -mb-px mt-[7px] flex items-end">
            {[
              ['auth', 'Authentication'],
              ['conf', 'Configurations'],
            ].map(([id, text]) => (
              <button
                key={id}
                type="button"
                role="tab"
                aria-selected={tab === id}
                onClick={() => setTab(id)}
                className={clsx(
                  'rounded-t border px-2',
                  tab === id
                    ? 'h-[30px] border-[#b8b5b2] border-b-[#f8f7f7] bg-gradient-to-b from-white to-[#f8f7f7]'
                    : 'h-[27px] border-l-0 border-[#b8b5b2] bg-gradient-to-b from-[#eceae9] to-[#dddbd9]',
                )}
              >
                {text}
              </button>
            ))}
          </div>
          <div
            role="tabpanel"
            className="grid grid-cols-[76px_1fr_auto] items-center gap-y-5 rounded-b rounded-tr border border-[#c4c1be] bg-[#f8f7f7] pt-[19px] pr-3 pb-[18px] pl-[6px]"
          >
            <label htmlFor="user">Username</label>
            <input id="user" type="text" defaultValue="sde" className={inputClass} />
            <div className="pl-[10px]">
              <SaveBox label="Save username" />
            </div>
            <label htmlFor="pass">Password</label>
            <input id="pass" type="text" defaultValue="***" className={inputClass} />
            <div className="pl-[10px]">
              <SaveBox label="Save password" />
            </div>
          </div>

          <button
            type="button"
            className="mt-2 h-[25px] w-full rounded border border-[#b8704f] bg-gradient-to-b from-[#fcb08d] to-[#f58f62] leading-[18px]"
          >
            <Accel text="Test Connection" at={0} />
          </button>

          <div className="mt-1 -mr-2 pl-[3px]">
            {OPTIONS.map((text) => (
              <label key={text} className="flex h-7 items-center gap-2 whitespace-nowrap">
                <input type="checkbox" className="size-[14px] shrink-0 appearance-none rounded-[3px] border border-[#999] bg-white" />
                {text}
              </label>
            ))}
          </div>
        </div>

        <div className="mt-[7px] flex gap-2">
          <DialogButton>帮助</DialogButton>
          <span className="flex-1" />
          <DialogButton>
            取消(<span className="border-b border-current">C</span>)
          </DialogButton>
          <DialogButton>
            确定(<span className="border-b border-current">O</span>)
          </DialogButton>
        </div>
      </form>
    </div>
  );
};

export default function App() {
  return (
    <div className="relative flex h-screen flex-col overflow-hidden bg-[#f2f1f0] font-['Noto_Sans','Noto_Sans_CJK_SC',sans-serif]">
      <Header />
      <MainToolbar />
      <EditToolbar />
      <div className="flex min-h-0 flex-1">
        <LayerToolbar />
        <div className="flex w-[294px] shrink-0 flex-col">
          <BrowserPanel />
          <GripRow />
          <LayersPanel />
        </div>
        <main className="ml-[6px] flex flex-1 items-end justify-end border-t border-l border-[#b8b5b2] bg-white pr-3 pb-2">
          <p className="text-[55px] leading-[72px] font-medium whitespace-nowrap text-white [text-shadow:2px_2px_3px_#c4c4c4]">
            云栖社区 yq.aliyun.com
          </p>
        </main>
      </div>
      <ConnectionDialog />
    </div>
  );
}
